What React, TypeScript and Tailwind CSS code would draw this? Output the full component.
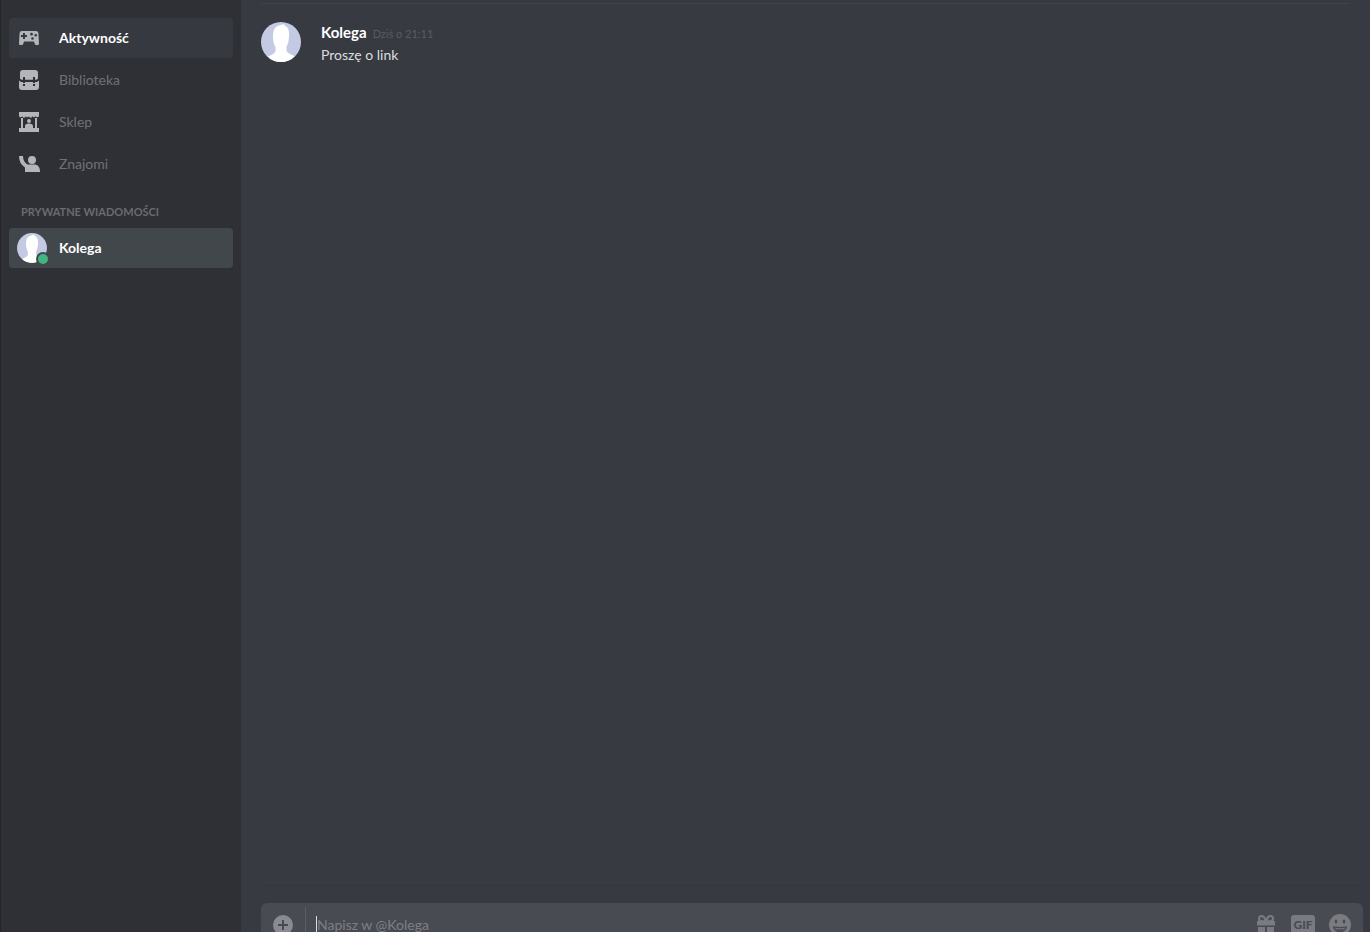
import React from 'react';
import clsx from 'clsx';

/* ─── Icons ─── */

type IconProps = { className?: string };

function GamepadIcon({ className }: IconProps) {
  return (
    <svg viewBox="0 0 20 20" className={className} fill="currentColor" aria-hidden="true">
      <path
        fillRule="evenodd"
        d="M3 3h14a2.4 2.4 0 0 1 2.4 2l.6 10.4c0 1-.7 1.600-1.500 1.600H17c-.6 0-1-.4-1.200-1L15 13.500H5L4.200 16c-.2.600-.6 1-1.200 1H1.500C.7 17 0 16.400 0 15.400L.6 5A2.400 2.400 0 0 1 3 3ZM4 5v2H2v2h2v2h2V9h2V7H6V5H4ZM12.500 4.800a1.400 1.400 0 1 0 0 2.800 1.400 1.400 0 0 0 0-2.800ZM16.700 6a1.300 1.300 0 1 0 0 2.600 1.300 1.300 0 0 0 0-2.600ZM13.500 9.200a1.300 1.300 0 1 0 0 2.600 1.300 1.300 0 0 0 0-2.600Z"
      />
    </svg>
  );
}

function BackpackIcon({ className }: IconProps) {
  return (
    <svg viewBox="0 0 20 20" className={className} fill="currentColor" aria-hidden="true">
      <path d="M4 0h12a3 3 0 0 1 3 3v5c0 1-1 1.700-2 1.700h-1V7h-2v2.700H6V7H4v2.700H3c-1 0-2-.7-2-1.700V3a3 3 0 0 1 3-3Z" />
      <path
        fillRule="evenodd"
        d="M0 10.500c.7.900 1.700 1.500 3 1.500h1v1h2v-1h8v1h2v-1h1c1.300 0 2.300-.6 3-1.500V17a3 3 0 0 1-3 3H3a3 3 0 0 1-3-3v-6.500ZM4 14v2h2v-2H4Zm10 0v2h2v-2h-2Z"
      />
    </svg>
  );
}

function StoreIcon({ className }: IconProps) {
  return (
    <svg viewBox="0 0 20 20" className={className} fill="currentColor" aria-hidden="true">
      <path d="M0 0h20v4a1.700 1.700 0 0 1-3.300 0 1.700 1.700 0 0 1-3.300 0 1.700 1.700 0 0 1-3.400 0 1.700 1.700 0 0 1-3.300 0 1.700 1.700 0 0 1-3.400 0A1.700 1.700 0 0 1 0 4V0Z" />
      <path d="M2 6h2v10h2v-2c0-1.500 1.300-2.500 4-2.500s4 1 4 2.500v2h2V6h2v10h2v4H0v-4h2V6Z" />
      <circle cx="10" cy="9" r="2" />
    </svg>
  );
}

function FriendsIcon({ className }: IconProps) {
  return (
    <svg viewBox="0 0 20 20" className={className} fill="currentColor" aria-hidden="true">
      <path d="M0 2h4c0 4 1.500 6.500 4.500 8.500H15c4 0 6 2.500 6 7.500H6v-4.500C2 11 0 7 0 2Z" />
      <circle cx="13" cy="6" r="4" />
    </svg>
  );
}

function PlusIcon({ className }: IconProps) {
  return (
    <svg viewBox="0 0 20 20" className={className} fill="currentColor" aria-hidden="true">
      <path fillRule="evenodd" d="M10 0a10 10 0 1 0 0 20 10 10 0 0 0 0-20ZM9 5h2v4h4v2h-4v4H9v-4H5V9h4V5Z" />
    </svg>
  );
}

function GiftIcon({ className }: IconProps) {
  return (
    <svg viewBox="0 0 20 20" className={className} fill="currentColor" aria-hidden="true">
      <path
        fillRule="evenodd"
        d="M0 6h1.600A3.300 3.300 0 0 1 1 3.500 3.500 3.500 0 0 1 4.500 0C7 0 8.200 1.600 9 3.500 9.800 1.600 11 0 13.500 0A3.500 3.500 0 0 1 17 3.500c0 1-.2 1.800-.6 2.500H18v4.500H0V6Zm4.500-4A1.500 1.500 0 0 0 3 3.500C3 5 4.500 5.300 7.200 5.300 6.600 3.200 5.800 2 4.500 2Zm9 0c-1.300 0-2.100 1.200-2.700 3.300 2.700 0 4.200-.3 4.200-1.800A1.500 1.500 0 0 0 13.500 2Z"
      />
      <path d="M1 12h7v8H1zM10 12h7v8h-7z" />
    </svg>
  );
}

function SmileIcon({ className }: IconProps) {
  return (
    <svg viewBox="0 0 22 22" className={className} fill="currentColor" aria-hidden="true">
      <path
        fillRule="evenodd"
        d="M11 0a11 11 0 1 0 0 22 11 11 0 0 0 0-22ZM7 5.500c.8 0 1.300.8 1.300 2s-.5 2-1.300 2-1.300-.8-1.300-2 .5-2 1.300-2Zm8 0c.8 0 1.300.8 1.300 2s-.5 2-1.300 2-1.300-.8-1.300-2 .5-2 1.300-2ZM4 12c4 1.200 10 1.200 14 0 0 3.500-3 6.500-7 6.500S4 15.500 4 12Z"
      />
      <path d="M6 13.700c3 .8 7 .8 10 0l-.8 1.600H6.800L6 13.700Z" />
    </svg>
  );
}

/* ─── Avatar ─── */

function Avatar({ className }: IconProps) {
  return (
    <svg viewBox="0 0 40 40" className={clsx('rounded-full', className)} aria-hidden="true">
      <rect width="40" height="40" fill="#c4cae3" />
      <path
        d="M12.500 9c.8-3 3-4.800 5.500-5.500 2-.4 3.500-1 5-1.500 0 1 .5 1.500 2 2.500 3 2 3.300 5.500 3 10-.3 5-1.200 8-2.500 10v4c1 3 5 4 8 5.500L29 40H11l-4-5.500c3-1.500 6.500-2.500 7.500-5.500v-4c-1.500-2-2.500-6-2.500-10 0-2 .2-4 .5-6Z"
        fill="#fff"
      />
    </svg>
  );
}

/* ─── Sidebar ─── */

const navItems = [
  { label: 'Aktywność', icon: GamepadIcon, active: true },
  { label: 'Biblioteka', icon: BackpackIcon, active: false },
  { label: 'Sklep', icon: StoreIcon, active: false },
  { label: 'Znajomi', icon: FriendsIcon, active: false },
];

function Sidebar() {
  return (
    <aside className="w-[241px] shrink-0 border-l border-[#242529] bg-[#2f3035] px-2 pt-[18px]">
      <nav className="flex flex-col gap-0.5">
        {navItems.map((item) => (
          <a
            key={item.label}
            href="#"
            className={clsx(
              'flex h-10 items-center gap-5 rounded px-2.5 text-sm',
              item.active ? 'bg-[#36393f] font-bold text-white' : 'text-[#6f7177]',
            )}
          >
            <item.icon className="h-5 w-5 shrink-0 overflow-visible text-[#b4b5b9]" />
            {item.label}
          </a>
        ))}
      </nav>

      <h2 className="px-3 pt-5 pb-2 text-[11px] leading-4 font-bold text-[#696b70] uppercase">
        Prywatne wiadomości
      </h2>
      <a
        href="#"
        className="flex h-10 items-center gap-3 rounded bg-[#42474c] px-2 text-sm font-bold text-white"
      >
        <span className="relative">
          <Avatar className="h-[30px] w-[30px]" />
          <span className="absolute -right-[3px] -bottom-[3px] h-3.5 w-3.5 rounded-full border-2 border-[#42474c] bg-[#43b581]" />
        </span>
        Kolega
      </a>
    </aside>
  );
}

/* ─── Chat ─── */

function Message() {
  return (
    <article className="mt-[18px] flex gap-5">
      <Avatar className="h-10 w-10 shrink-0" />
      <div>
        <div className="flex h-5 items-baseline gap-1.5">
          <h3 className="text-[15px] leading-5 font-bold text-white">Kolega</h3>
          <time className="text-[11px] text-[#595c62]">Dziś o 21:11</time>
        </div>
        <p className="mt-[3px] text-sm leading-5 text-[#dcddde]">Proszę o link</p>
      </div>
    </article>
  );
}

function Composer() {
  return (
    <form className="-mb-[15px] flex h-11 items-center rounded-md bg-[#484b52] text-[#797b80]">
      <button type="button" aria-label="Dodaj plik" className="flex h-9 w-[45px] items-center justify-center border-r border-[#5b5e65]">
        <PlusIcon className="h-5 w-5 text-[#8a8b91]" />
      </button>
      {/* caret */}
      <span className="ml-2.5 h-[18px] w-px bg-[#dcddde]" />
      <input
        aria-label="Napisz w @Kolega"
        placeholder="Napisz w @Kolega"
        className="min-w-0 flex-1 bg-transparent text-sm text-[#dcddde] caret-white outline-none placeholder:text-[#7d7f84]"
      />
      <div className="flex items-center gap-3.5 pr-3">
        <button type="button" aria-label="Prezent">
          <GiftIcon className="h-5 w-5" />
        </button>
        <button
          type="button"
          className="h-5 w-6 rounded-[3px] bg-[#797b80] text-xs leading-5 font-black text-[#484b52]"
        >
          GIF
        </button>
        <button type="button" aria-label="Emoji">
          <SmileIcon className="h-[22px] w-[22px]" />
        </button>
      </div>
    </form>
  );
}

export default function App() {
  return (
    <div className="flex h-screen overflow-clip bg-[#373a41] font-['Lato','Open_Sans',sans-serif]">
      <Sidebar />
      <main className="flex min-w-0 flex-1 flex-col pl-5">
        <section className="mt-[3px] mr-[21px] flex-1 border-t border-[#404349]">
          <Message />
        </section>
        <footer className="mr-[7px] border-t border-[#3b3e44] pt-5">
          <Composer />
        </footer>
      </main>
    </div>
  );
}
